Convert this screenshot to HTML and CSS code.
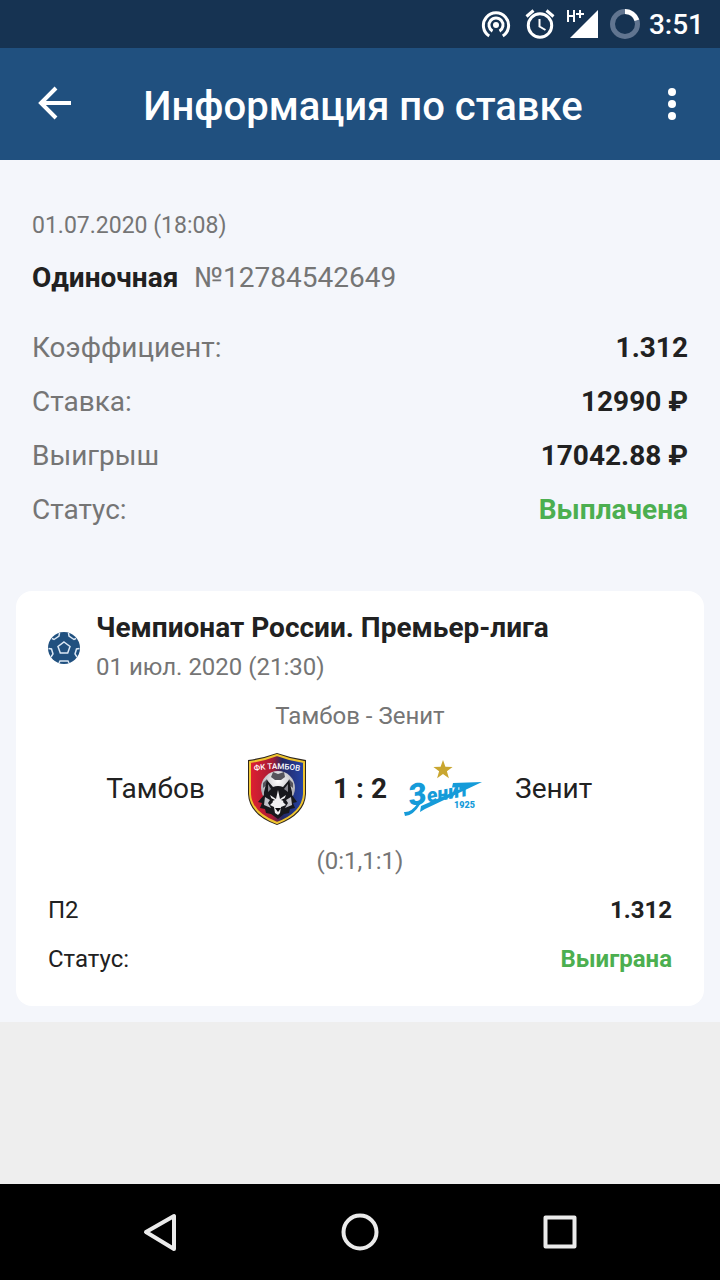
FILE: index.html
```html
<!DOCTYPE html>
<html lang="ru">
<head>
    <meta charset="UTF-8">
    <meta name="viewport" content="width=device-width, initial-scale=1.0">
    <title>Информация по ставке</title>
    <link rel="stylesheet" href="styles.css">
</head>
<body>
    <div class="status-bar">
        <svg class="status-icon" width="32" height="32" viewBox="0 0 32 32" fill="none" stroke="#fff" stroke-width="3">
            <circle cx="17" cy="17" r="3" fill="#fff" stroke="none"/>
            <path d="M13.5 23.1a7 7 0 1 1 7 0"/>
            <path d="M10.2 28a12.6 12.6 0 1 1 13.6 0"/>
        </svg>
        <svg class="status-icon" width="32" height="32" viewBox="0 0 32 32" fill="none" stroke="#fff" stroke-width="3">
            <circle cx="17" cy="17.500" r="11.700"/>
            <path d="M3.500 8.500l7-6M30.500 8.500l-7-6"/>
            <path d="M16.500 11v7.500l6 3.500" stroke-width="2"/>
        </svg>
        <svg class="signal-icon" width="34" height="32" viewBox="0 0 34 32">
            <path d="M3 30L31 2v28z" fill="#fff"/>
            <path d="M1 2v12M7 2v12M1 8h6M9 6h8M13 2v8" fill="none" stroke="#fff" stroke-width="2"/>
        </svg>
        <svg class="status-icon" width="32" height="32" viewBox="0 0 32 32" fill="none" stroke-width="5">
            <circle cx="16" cy="16" r="12.500" stroke="#617590"/>
            <path d="M16 3.500a12.500 12.500 0 0 1 11.900 8.700" stroke="#fff"/>
        </svg>
        <span class="clock">3:51</span>
    </div>

    <header class="app-bar">
        <button class="icon-btn" aria-label="Назад">
            <svg width="36" height="36" viewBox="0 0 36 36" fill="none" stroke="#fff" stroke-width="4">
                <path d="M35 17H5M20 2L5 17l15 15"/>
            </svg>
        </button>
        <h1 class="app-title">Информация по ставке</h1>
        <button class="icon-btn" aria-label="Меню">
            <svg width="12" height="36" viewBox="0 0 12 36" fill="#fff">
                <circle cx="6" cy="6" r="4"/>
                <circle cx="6" cy="18" r="4"/>
                <circle cx="6" cy="30" r="4"/>
            </svg>
        </button>
    </header>

    <main class="content">
        <section class="bet-info">
            <div class="bet-date">01.07.2020 (18:08)</div>
            <div class="bet-type"><strong>Одиночная</strong> <span>№12784542649</span></div>
            <dl class="bet-rows">
                <div class="bet-row"><dt>Коэффициент:</dt><dd>1.312</dd></div>
                <div class="bet-row"><dt>Ставка:</dt><dd>12990 ₽</dd></div>
                <div class="bet-row"><dt>Выигрыш</dt><dd>17042.88 ₽</dd></div>
                <div class="bet-row"><dt>Статус:</dt><dd class="success">Выплачена</dd></div>
            </dl>
        </section>

        <section class="event-card">
            <div class="event-header">
                <svg width="32" height="32" viewBox="0 0 32 32">
                    <circle cx="16" cy="16" r="16" fill="#20507f"/>
                    <path d="M16 10l6 4.500-2.300 6.500h-7.400L10 14.500zM11.500 1l-.5 3-5 3.500-2-1M20.500 1l.5 3 5 3.500 2-1M.5 16.500l3 .5 1.500 5-2 3M31.500 16.500l-3 .5-1.500 5 2 3M11 31l1-2h8l1 2" fill="none" stroke="#dce8f5" stroke-width="1.500"/>
                </svg>
                <div>
                    <h2 class="event-title">Чемпионат России. Премьер-лига</h2>
                    <div class="event-date">01 июл. 2020 (21:30)</div>
                </div>
            </div>

            <div class="match-name">Тамбов - Зенит</div>
            <div class="match">
                <span class="team team-home">Тамбов</span>
                <svg class="team-logo" width="80" height="76" viewBox="0 0 80 76">
                    <defs>
                        <linearGradient id="shield" x1="0" x2="1" y1="0" y2="0">
                            <stop offset="0" stop-color="#e02030"/>
                            <stop offset=".42" stop-color="#a51b35"/>
                            <stop offset=".6" stop-color="#242964"/>
                            <stop offset="1" stop-color="#2344a8"/>
                        </linearGradient>
                        <radialGradient id="ball" cx=".5" cy=".3" r=".7">
                            <stop offset="0" stop-color="#fff"/>
                            <stop offset="1" stop-color="#9a9aa2"/>
                        </radialGradient>
                    </defs>
                    <!-- shield -->
                    <path d="M11 9Q26 7 40 2q14 5 29 7v34q-1 21-29 31Q12 64 11 43z" fill="#30271c"/>
                    <path d="M13 11Q27 9 40 4q13 5 27 7v32q-1 19-27 29Q14 62 13 43z" fill="url(#shield)" stroke="#efc52f" stroke-width="2"/>
                    <!-- ball -->
                    <circle cx="41" cy="37" r="17" fill="url(#ball)"/>
                    <path d="M36 21l5 2 6-2 1 5-4 3h-6l-4-3zM26 32l4-4 1 5-5 4zM56 32l-4-4-1 5 5 4z" fill="#55545c"/>
                    <!-- wolf -->
                    <path d="M30 29l6 7q5-2 10 0l6-7 3 12 0 3 5 7-4 1 2 5-5 1-1 4-5 1-6 5-7-5-5-1-1-4-5-1 2-5-4-1 6-7v-3z" fill="#17181c"/>
                    <path d="M31 33l3 5-3 3zM51 33l-4 5 4 3z" fill="#85858d"/>
                    <path d="M28 46l5 3-2 3 3 5-7-3zM54 46l-5 3 2 3-3 5 7-3z" fill="#c4c4ca"/>
                    <path d="M33 44l6 4 2-9 2 9 6-4-3 7 3 3-5 2-1 6-2 2-3-2-1-6-4-2 3-3z" fill="#f0f0f1"/>
                    <path d="M34 47l4 2-3 1zM48 47l-4 2 3 1zM38 57h6l-3 4z" fill="#08090b"/>
                    <path id="badge-arc" d="M12 21q28-6 56 0" fill="none"/>
                    <text class="badge-text"><textPath href="#badge-arc" startOffset="50%" text-anchor="middle">ФК ТАМБОВ</textPath></text>
                </svg>
                <span class="score">1 : 2</span>
                <svg class="team-logo" width="80" height="76" viewBox="0 0 80 76">
                    <path d="M40 9l2.400 6.800 7.200.1-5.700 4.300 2 7-5.900-4.100-5.900 4.100 2-7-5.700-4.300 7.200-.1z" fill="#c9a630"/>
                    <text class="zenit-text" x="7" y="55" transform="rotate(-10 7 55)"><tspan class="zenit-cap">З</tspan>енит</text>
                    <path d="M50 32l29-1-57 27-5 3 1-6 44-19-13 .5zM1 61q7 1 14-9l3 0Q10 65 2 65z" fill="#159bd9"/>
                    <text class="zenit-year" x="51" y="57">1925</text>
                </svg>
                <span class="team team-away">Зенит</span>
            </div>
            <div class="periods">(0:1,1:1)</div>

            <dl class="outcome">
                <div class="outcome-row"><dt>П2</dt><dd>1.312</dd></div>
                <div class="outcome-row"><dt>Статус:</dt><dd class="success">Выиграна</dd></div>
            </dl>
        </section>
    </main>

    <nav class="nav-bar">
        <button class="icon-btn" aria-label="Назад">
            <svg width="40" height="40" viewBox="0 0 40 40" fill="none" stroke="#ebebeb" stroke-width="4" stroke-linejoin="round">
                <path d="M34 4v33L6 20z"/>
            </svg>
        </button>
        <button class="icon-btn" aria-label="Домой">
            <svg width="40" height="40" viewBox="0 0 40 40" fill="none" stroke="#ebebeb" stroke-width="4">
                <circle cx="20" cy="20" r="16.500"/>
            </svg>
        </button>
        <button class="icon-btn" aria-label="Недавние">
            <svg width="40" height="40" viewBox="0 0 40 40" fill="none" stroke="#ebebeb" stroke-width="4" stroke-linejoin="round">
                <rect x="5.500" y="5.500" width="29" height="29"/>
            </svg>
        </button>
    </nav>
</body>
</html>
```
FILE: styles.css
```css
* {
    box-sizing: border-box;
}

body {
    display: flex;
    flex-direction: column;
    min-height: 100vh;
    margin: 0;
    background: #eee;
    color: #212121;
    font-family: Roboto, sans-serif;
    font-size: 28px;
    line-height: 32px;
}

h1, h2, dl, dd {
    margin: 0;
}

svg {
    display: block;
    flex-shrink: 0;
}

.status-bar {
    display: flex;
    align-items: center;
    justify-content: flex-end;
    gap: 12px;
    height: 48px;
    padding-right: 16px;
    background: #163352;
    color: #fff;
}

.signal-icon {
    margin-right: -4px;
}

.clock {
    margin-left: -4px;
    padding-top: 2px;
    font-weight: 500;
    line-height: 48px;
}

.app-bar {
    display: flex;
    align-items: center;
    justify-content: space-between;
    height: 112px;
    padding: 0 12px 0 18px;
    background: #20507f;
    color: #fff;
}

.app-title {
    font-size: 40px;
    font-weight: 500;
    line-height: 48px;
    padding-top: 6px;
}

.icon-btn {
    display: flex;
    align-items: center;
    justify-content: center;
    width: 72px;
    height: 72px;
    padding: 0;
    border: none;
    background: transparent;
    cursor: pointer;
}

.content {
    padding: 48px 16px 16px;
    background: #f4f6fb;
}

.bet-info {
    padding: 0 16px;
    color: #757575;
}

.bet-date {
    font-size: 23px;
    line-height: 36px;
}

.bet-type {
    display: flex;
    gap: 16px;
    margin: 16px 0 32px;
    line-height: 36px;
}

.bet-type strong {
    color: #212121;
}

.bet-row {
    display: flex;
    justify-content: space-between;
    margin-bottom: 18px;
    line-height: 36px;
}

.bet-row:first-child {
    margin-top: 34px;
}

.bet-row dd {
    color: #212121;
    font-weight: 700;
}

.bet-row .success,
.outcome-row .success {
    color: #4caf50;
}

.event-card {
    margin-top: 63px;
    padding: 19px 32px 16px;
    border-radius: 16px;
    background: #fff;
}

.event-header {
    display: flex;
    align-items: center;
    gap: 16px;
}

.event-title {
    font-size: 28px;
    line-height: 36px;
}

.event-date,
.match-name,
.periods {
    color: #757575;
    font-size: 24px;
    line-height: 36px;
}

.event-date {
    margin-top: 3px;
}

.match-name,
.periods {
    text-align: center;
}

.match-name {
    margin-top: 13px;
}

.match {
    display: grid;
    grid-template-columns: 1fr 80px 86px 80px 1fr;
    align-items: center;
    margin: 17px 0 16px;
}

.team {
    padding: 0 32px;
}

.team-home {
    text-align: right;
}

.score {
    font-weight: 700;
    text-align: center;
}

.badge-text {
    fill: #fff;
    font-size: 8px;
    font-weight: 500;
}

.zenit-text {
    fill: #159bd9;
    font-size: 20px;
    font-style: italic;
    font-weight: 900;
}

.zenit-cap {
    font-size: 30px;
}

.zenit-year {
    fill: #159bd9;
    font-size: 9px;
    font-weight: 900;
}

.outcome {
    margin-top: 13px;
    font-size: 24px;
}

.outcome-row {
    display: flex;
    justify-content: space-between;
    margin-bottom: 12px;
    line-height: 37px;
}

.outcome-row dd {
    font-weight: 700;
}

.nav-bar {
    display: flex;
    align-items: center;
    justify-content: center;
    gap: 128px;
    height: 96px;
    margin-top: auto;
    background: #000;
}
```
